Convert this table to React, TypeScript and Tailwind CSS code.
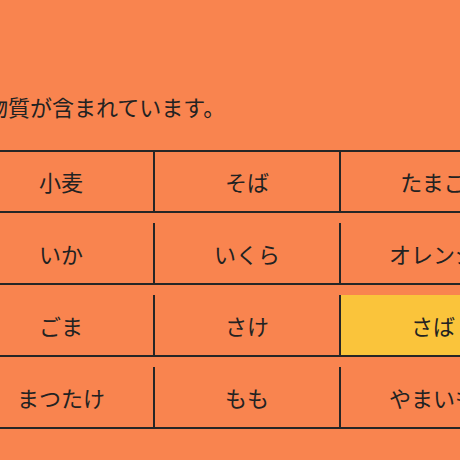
const rows: { name: string; hit?: boolean }[][] = [
  [{ name: "小麦" }, { name: "そば" }, { name: "たまご" }],
  [{ name: "いか" }, { name: "いくら" }, { name: "オレンジ" }],
  [{ name: "ごま" }, { name: "さけ" }, { name: "さば", hit: true }],
  [{ name: "まつたけ" }, { name: "もも" }, { name: "やまいも" }],
];

export default function App() {
  return (
    <div
      className="min-h-screen w-[460px] overflow-hidden bg-[#f9844f] text-[#222]"
      style={{ fontFamily: '"Noto Sans CJK JP", "Noto Sans", sans-serif' }}
    >
      <div className="ml-[-31px] w-[558px] pt-[90px]">
        <p className="ml-[-93px] h-[32px] whitespace-nowrap text-[22px] leading-[32px]">
          アレルギー物質が含まれています。
        </p>
        <div className="mt-[28px] border-t-2 border-[#262626]">
          {rows.map((row, i) => (
            <div
              key={i}
              className={
                i === 0
                  ? "flex h-[61px] border-b-2 border-[#262626]"
                  : "mt-[10px] flex h-[62px] border-b-2 border-[#262626]"
              }
            >
              {row.map((cell) => (
                <div
                  key={cell.name}
                  className={
                    cell.hit
                      ? "flex w-[186px] items-center justify-center border-r-2 border-[#262626] bg-[#fac43b] text-[22px]"
                      : "flex w-[186px] items-center justify-center border-r-2 border-[#262626] text-[22px]"
                  }
                >
                  {cell.name}
                </div>
              ))}
            </div>
          ))}
        </div>
      </div>
    </div>
  );
}
